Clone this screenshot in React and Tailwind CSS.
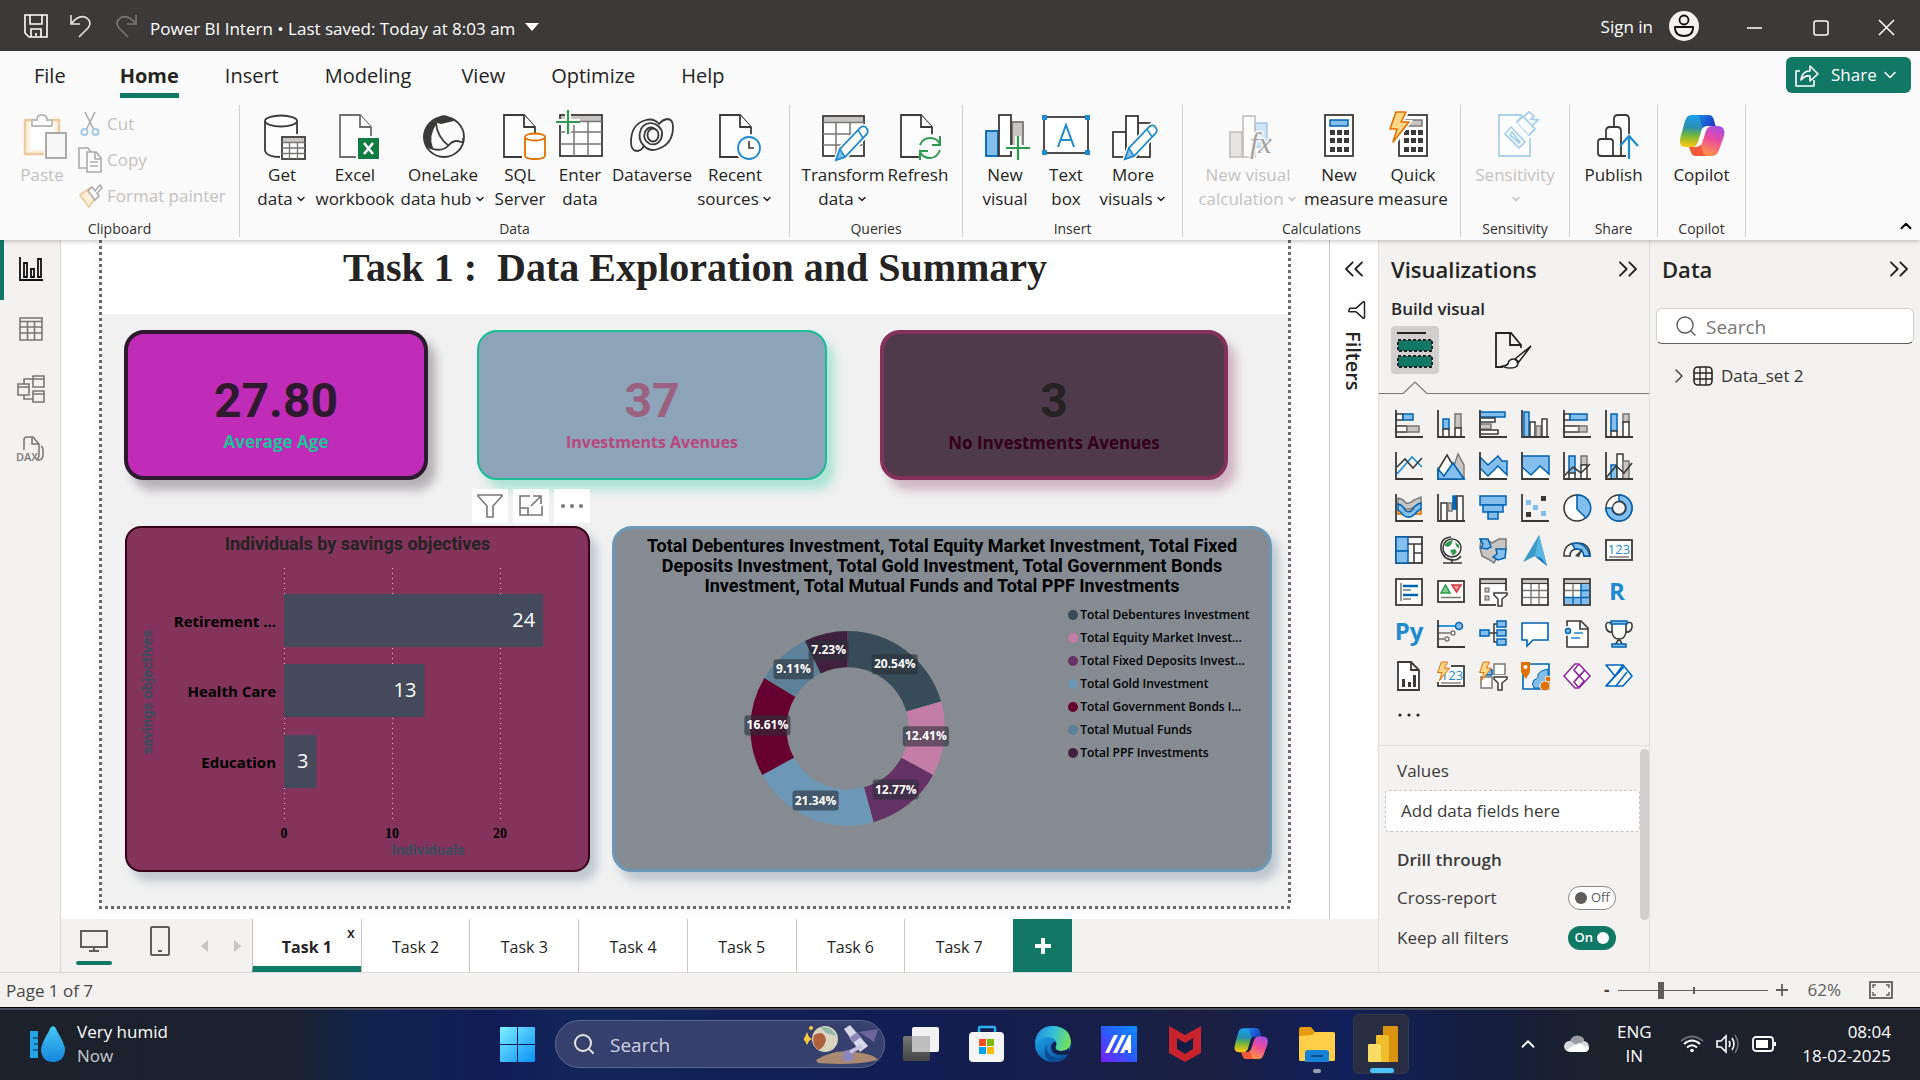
import React from "react";
import { ChevronDown, ChevronUp, ChevronRight, ChevronsLeft, ChevronsRight, Search, Filter } from "lucide-react";

const DK = "#3b3a39";
const BL = "#83beec";
const BS = "#0063b1";
const GR = "#c8c6c4";
const GS = "#797775";
const WH = "#ffffff";

/* ---------- shared drawing helpers ---------- */

function Svg({ s = 48, children, className = "" }) {
  return (
    <svg width={s} height={s} viewBox={`0 0 ${s} ${s}`} fill="none" className={`shrink-0 overflow-visible ${className}`} aria-hidden="true">
      {children}
    </svg>
  );
}

const Box = ({ x, y, w, h, f = WH, k = DK, sw = 1.5 }) => (
  <rect x={x} y={y} width={w} height={h} fill={f} stroke={k} strokeWidth={sw} />
);

const Axis = () => <path d="M1 0V27H28" stroke={DK} strokeWidth="1.8" />;

const Doc = ({ x = 8, c = DK, h = 42 }) => (
  <g stroke={c} strokeWidth="1.8" fill="#fdfdfd">
    <path d={`M${x} 3H${x + 20}L${x + 31} 15V${h + 3}H${x}Z`} />
    <path d={`M${x + 20} 3V15H${x + 31}`} />
  </g>
);

const Pencil = ({ x = 0, y = 0 }) => (
  <g transform={`translate(${x} ${y})`}>
    <path d="M16 47L20 36L41 14Q45 12 47 16Q49 19 46 22L25 44Z" fill="#fff" stroke="#fafafa" strokeWidth="5" />
    <path d="M16 47L20 36L41 14Q45 12 47 16Q49 19 46 22L25 44Z" fill="#fff" stroke="#1e8bcd" strokeWidth="1.8" />
    <path d="M16 47L20 36L25 44Z" fill="#83beec" stroke="#1e8bcd" strokeWidth="1.5" />
    <path d="M38 17L43 25" stroke="#1e8bcd" strokeWidth="1.5" />
  </g>
);

const Plus = ({ x, y }) => (
  <g>
    <path d={`M${x - 12} ${y}H${x + 12}M${x} ${y - 12}V${y + 12}`} stroke="#fafafa" strokeWidth="6" />
    <path d={`M${x - 12} ${y}H${x + 12}M${x} ${y - 12}V${y + 12}`} stroke="#2f9950" strokeWidth="2.2" />
  </g>
);

const Bolt = ({ s = 1 }) => (
  <path transform={`scale(${s})`} d="M7 0H17L12 10H20L4 30L8 17H1Z" fill="#ffd68a" stroke="#e07000" strokeWidth="1.6" strokeLinejoin="round" />
);

const Calc = ({ x, screen = BL, line = BS }) => (
  <g>
    <Box x={x} y={3} w={28} h={41} sw={1.8} />
    <Box x={x + 5} y={8} w={18} h={6} f={screen} k={line} />
    {[18, 26, 35].map((y) => [5, 12, 19].map((d) => <rect key={`${y}-${d}`} x={x + d} y={y} width="5" height="5" fill={DK} />))}
  </g>
);

function CopilotMark({ s = 48, id }) {
  return (
    <svg width={s} height={s} viewBox="0 0 48 48" fill="none" aria-hidden="true" className="shrink-0">
      <defs>
        <linearGradient id={`${id}a`} x1="14" y1="3" x2="12" y2="34" gradientUnits="userSpaceOnUse">
          <stop stopColor="#1aa0ec" />
          <stop offset="0.4" stopColor="#2a8fb0" />
          <stop offset="0.65" stopColor="#6fb53c" />
          <stop offset="1" stopColor="#f7c80c" />
        </linearGradient>
        <linearGradient id={`${id}b`} x1="40" y1="14" x2="28" y2="44" gradientUnits="userSpaceOnUse">
          <stop stopColor="#a44fe6" />
          <stop offset="0.45" stopColor="#ee4b9b" />
          <stop offset="1" stopColor="#ff9a3e" />
        </linearGradient>
        <linearGradient id={`${id}c`} x1="20" y1="3" x2="36" y2="14" gradientUnits="userSpaceOnUse">
          <stop stopColor="#1a8be8" />
          <stop offset="1" stopColor="#2036c4" />
        </linearGradient>
      </defs>
      <path d="M13 3H31Q34 3 35.500 7L37.500 14H29Q25 14 23.500 18L20 30Q18 35 14 35H8Q0 35 2.500 25L7 9Q9 3 13 3Z" fill={`url(#${id}a)`} />
      <path d="M20 3H31Q34 3 35.500 7L37.500 14H29Q26 14 24.500 16L22 8Q21 3 17 3Z" fill={`url(#${id}c)`} />
      <path d="M35 14H40Q48 14 46 24L41 38Q39 44 34 44H18Q14 44 13 40L11 35H18Q22.500 35 24 31L28 19Q29.500 14 35 14Z" fill={`url(#${id}b)`} />
      <path d="M11 35H18Q21 35 22.500 33L25 40Q26.500 44 30 44H18Q14 44 13 40Z" fill="#f5573b" />
    </svg>
  );
}

/* ---------- ribbon icons ---------- */

const ICONS = {
  getData: (
    <Svg>
      <path d="M7 9V39Q10 45 22 45V24H39V9Z" fill="#fdfdfd" />
      <path d="M7 9V39Q9 45 22 45M39 9V22" stroke={DK} strokeWidth="1.8" />
      <ellipse cx="23" cy="9" rx="16" ry="5.500" fill="#fff" stroke={DK} strokeWidth="1.8" />
      <Box x={24} y={25} w={23} h={22} sw={1.8} />
      <rect x="25" y="26" width="21" height="4" fill={GR} />
      <path d="M24 30.500H47M24 36H47M24 41.500H47M31.500 30V47M39.500 30V47" stroke={GS} strokeWidth="1.4" />
    </Svg>
  ),
  excel: (
    <Svg>
      <Doc x={9} c="#6e6d6b" />
      <rect x="25" y="24" width="24" height="25" fill="#fafafa" />
      <rect x="27" y="26" width="21" height="21" fill="#107c41" />
      <path d="M33 31L42 42M42 31L33 42" stroke="#fff" strokeWidth="2.600" />
    </Svg>
  ),
  oneLake: (
    <Svg>
      <path d="M14 10Q24 -3 35 9L22 12Z" fill={DK} />
      <circle cx="25" cy="25" r="20" stroke={DK} strokeWidth="1.8" />
      <path d="M14 9Q2 18 5 30Q7 37 14 36Q9 24 18 11Z" fill={DK} />
      <path d="M17 11Q18 25 30 34M7 34Q22 42 30 33Q35 27 42 30Q45 31 44 26" stroke={DK} strokeWidth="1.8" />
    </Svg>
  ),
  sql: (
    <Svg>
      <Doc x={8} />
      <rect x="26" y="21" width="25" height="28" fill="#fafafa" />
      <path d="M29 26V44Q30 47 39 47T49 44V26" fill="#fff" stroke="#e07000" strokeWidth="1.8" />
      <ellipse cx="39" cy="25" rx="10" ry="3.500" fill="#fff" stroke="#e07000" strokeWidth="1.8" />
    </Svg>
  ),
  enter: (
    <Svg>
      <Box x={4} y={3} w={42} h={41} sw={1.8} />
      <rect x="5" y="4" width="40" height="5" fill={GR} />
      <path d="M4 9.500H46M4 20H46M4 32H46M18 10V44M32 10V44" stroke={GS} strokeWidth="1.5" />
      <Plus x={12} y={10} />
    </Svg>
  ),
  dataverse: (
    <Svg>
      <g stroke={DK} strokeWidth="1.8">
        <path d="M31 12Q26 6 18 8Q3 12 3 30Q3 39 9 39Q13 39 16 34Q22 40 30 37Q45 32 45 15Q45 7 39 7Q34 8 31 12Z" />
        <path d="M16 34Q9 27 13 17Q18 9 27 12Q37 17 33 27Q29 34 22 32Q14 28 17 20Q20 14 26 16" />
        <ellipse cx="25" cy="23" rx="5.500" ry="6.500" />
      </g>
    </Svg>
  ),
  recent: (
    <Svg>
      <Doc x={9} />
      <circle cx="38" cy="36" r="14" fill="#fafafa" />
      <circle cx="38" cy="36" r="11" fill="#fff" stroke="#1e8bcd" strokeWidth="1.8" />
      <path d="M38 29V36H43" stroke={DK} strokeWidth="1.600" />
    </Svg>
  ),
  transform: (
    <Svg>
      <Box x={4} y={4} w={41} h={40} sw={1.8} />
      <rect x="5" y="5" width="39" height="5" fill={GR} />
      <path d="M4 10.500H45M4 22H45M4 33H45M17 11V44M31 11V44" stroke={GS} strokeWidth="1.5" />
      <Pencil x={1} y={1} />
    </Svg>
  ),
  refresh: (
    <Svg>
      <Doc x={7} />
      <circle cx="36" cy="36" r="14" fill="#fafafa" />
      <path d="M26 33Q29 26 36 26Q43 26 46 32M46 24V33H38M46 38Q43 46 36 46Q29 46 26 40M26 48V39H34" stroke="#2f9950" strokeWidth="2" />
    </Svg>
  ),
  newVisual: (
    <Svg>
      <Box x={5} y={19} w={12} h={25} f={BL} k={BS} sw={1.8} />
      <Box x={31} y={10} w={11} h={24} f={GR} k={GS} sw={1.8} />
      <Box x={18} y={3} w={12} h={41} sw={1.8} />
      <Plus x={37} y={36} />
    </Svg>
  ),
  textBox: (
    <Svg>
      <Box x={2} y={5} w={44} h={36} sw={1.8} />
      <path d="M16 35L24 13L32 35M18.500 28H29.500" stroke="#1e8bcd" strokeWidth="2" />
      {[[0, 3], [43, 3], [0, 38], [43, 38]].map(([x, y]) => <rect key={`${x}-${y}`} x={x} y={y} width="5" height="5" fill="#1e8bcd" />)}
    </Svg>
  ),
  moreVisuals: (
    <Svg>
      <Box x={4} y={20} w={13} h={25} sw={1.8} />
      <Box x={29} y={11} w={12} h={34} sw={1.8} />
      <Box x={17} y={4} w={12} h={41} sw={1.8} />
      <Pencil />
    </Svg>
  ),
  newCalc: (
    <Svg>
      <Box x={6} y={20} w={12} h={25} f="#e6e5e4" k="#bdbbb9" />
      <Box x={31} y={11} w={12} h={24} f="#cde4f7" k="#a5c8e4" />
      <Box x={19} y={4} w={12} h={41} f="#fff" k="#bdbbb9" />
      <text x="26" y="41" fontFamily="Liberation Serif, serif" fontStyle="italic" fontSize="30" fill="#a3a19f" stroke="#fafafa" strokeWidth="3" paintOrder="stroke">fx</text>
    </Svg>
  ),
  newMeasure: <Svg><Calc x={10} /></Svg>,
  quick: (
    <Svg>
      <Calc x={10} screen={GR} line={GS} />
      <path d="M4 -3H22L16 8H24L6 34L-1 20Z" fill="#fafafa" />
      <Bolt />
    </Svg>
  ),
  sensitivity: (
    <Svg>
      <g stroke="#a9d2ea" strokeWidth="1.8" fill="#fdfdfd">
        <path d="M31 3H8V44H39V26" />
        <path d="M14 22L20 15L34 30L28 36Z" />
        <path d="M19 23L21 20L29 30L28 31Z" />
        <path d="M26 10L30 5L43 18L38 23Z" fill="#a9d2ea" />
        <path d="M26 10L32 4L44 17L38 23M31 6L38 0L43 4L40 7L47 8L40 15" />
      </g>
    </Svg>
  ),
  publish: (
    <Svg>
      <g stroke={DK} strokeWidth="1.8" fill="#fdfdfd">
        <path d="M24 44V7Q24 3 28 3H35Q39 3 39 7V44Z" />
        <path d="M16 44V19Q16 15 20 15H27Q31 15 31 19V44Z" />
        <path d="M8 41V30Q8 27 11 27H20Q23 27 23 30V44H11Q8 44 8 41Z" />
      </g>
      <path d="M39 22V47" stroke="#fafafa" strokeWidth="6" />
      <path d="M39 47V24M30 34L39 24L48 34" stroke="#1e8bcd" strokeWidth="2.200" />
    </Svg>
  ),
  copilot: <CopilotMark id="rc" />,
};

function RibbonButton({ icon, l1, l2, caret, w, off }) {
  return (
    <button disabled={off} className={`flex ${w} shrink-0 flex-col items-center text-[17px] leading-6 whitespace-nowrap ${off ? "text-[#c4c2c0]" : "text-[#252423]"}`}>
      {ICONS[icon]}
      <span className="mt-[3px]">{l1}</span>
      <span className="flex h-6 items-center">
        {l2}
        {caret && <ChevronDown size={12} strokeWidth={3} className="ml-0.5" />}
      </span>
    </button>
  );
}

function Group({ name, w, children, pl = "" }) {
  return (
    <section aria-label={name} className={`flex ${w} h-[132px] shrink-0 flex-col border-r border-[#d2d0ce]`}>
      <div className={`flex flex-1 pt-[7px] ${pl}`}>{children}</div>
      <div className="text-center text-[14px] leading-4 text-[#323130]">{name}</div>
    </section>
  );
}

const TABS = [
  ["File", "mr-2"],
  ["Home", "border-b-[5px] border-[#117865] font-bold"],
  ["Insert", ""],
  ["Modeling", "mr-1"],
  ["View", ""],
  ["Optimize", ""],
  ["Help", ""],
];

function TitleBar() {
  return (
    <header className="flex h-[51px] items-center bg-[#3b3a39] text-white">
      <button aria-label="Save" className="ml-6">
        <Svg s={24}>
          <path d="M1 1H23V23H5L1 19ZM6 1V10H18V1M7 23V15H17V23M12 19V22" stroke="#fff" strokeWidth="1.600" />
        </Svg>
      </button>
      <button aria-label="Undo" className="ml-[22px]">
        <Svg s={24}><path d="M1 1V10H10M1 10Q8 1 15 3Q23 7 18 14L9 23" stroke="#e6e5e4" strokeWidth="1.600" /></Svg>
      </button>
      <button aria-label="Redo" className="ml-5">
        <Svg s={24}><path d="M22 1V10H13M22 10Q15 1 8 3Q0 7 5 14L14 23" stroke="#797775" strokeWidth="1.600" /></Svg>
      </button>
      <button className="ml-3 flex items-center pt-1.5 text-[17px] leading-6">
        Power BI Intern • Last saved: Today at 8:03 am
        <svg width="14" height="8" className="mb-1 ml-2.5" aria-hidden="true"><path d="M0 0H14L7 8Z" fill="#fff" /></svg>
      </button>
      <button className="ml-auto flex items-center gap-4 text-[17px]">
        <span className="pt-0.5">Sign in</span>
        <svg width="30" height="30" viewBox="0 0 30 30" aria-hidden="true">
          <circle cx="15" cy="15" r="15" fill="#f3f2f1" />
          <g fill="none" stroke="#111" strokeWidth="1.800"><circle cx="15" cy="9" r="4.500" /><path d="M6 16H24V18Q23 25 15 25T6 18Z" /></g>
        </svg>
      </button>
      <button aria-label="Minimize" className="ml-12 mt-1"><Svg s={16}><path d="M0 8H15" stroke="#fff" strokeWidth="1.500" /></Svg></button>
      <button aria-label="Maximize" className="mt-1 ml-[50px]"><Svg s={16}><rect x="1" y="1" width="14" height="14" rx="2" stroke="#fff" strokeWidth="1.500" /></Svg></button>
      <button aria-label="Close" className="mt-1 mr-[25px] ml-[50px]"><Svg s={16}><path d="M0 0L15 15M15 0L0 15" stroke="#fff" strokeWidth="1.500" /></Svg></button>
    </header>
  );
}

function Ribbon() {
  return (
    <div className="relative z-10 bg-[#fafafa] shadow-[0_1px_5px_rgba(0,0,0,0.25)]">
      <nav className="flex h-[54px] items-start pl-[11px] text-[20px] text-[#252423]">
        {TABS.map(([t, c]) => (
          <a key={t} href="#" className="px-[23px]">
            <span className={`block h-[47px] pt-[11px] leading-7 ${c}`}>{t}</span>
          </a>
        ))}
        <button className="mt-[6px] mr-[9px] ml-auto flex h-9 w-[125px] items-center rounded-md bg-[#117865] pl-[9px] text-[17px] text-white">
          <Svg s={24}><path d="M5 8H1V23H19V17M6 17Q7 8 15 8V3L23 11L15 18V13Q10 12 6 17Z" stroke="#fff" strokeWidth="1.600" strokeLinejoin="round" /></Svg>
          <span className="ml-3">Share</span>
          <ChevronDown size={20} strokeWidth={1.8} className="ml-[3px]" />
        </button>
      </nav>
      <div className="flex h-[135px]">
        <Group name="Clipboard" w="w-[240px]">
          <button disabled className="ml-[12px] flex w-[60px] flex-col items-center text-[17px] leading-6 text-[#c4c2c0]">
            <Svg className="ml-2">
              <path d="M3 8V42H22V22H37V8Z" fill="#fdf3e0" />
              <rect x="8" y="12" width="25" height="26" fill="#fff" />
              <path d="M22 42H3V8H12M37 20V8H28" stroke="#f0c9a0" strokeWidth="2.400" />
              <path d="M10 14V8H15Q15 3 20 3T25 8H30V14Z" fill="#fff" stroke="#bdbbb9" strokeWidth="1.800" />
              <Box x={24} y={21} w={20} h={25} f="#f7f7f7" k="#adabaa" sw={2} />
            </Svg>
            <span className="mt-[3px]">Paste</span>
          </button>
          <div className="flex flex-col items-start text-[17px] text-[#c4c2c0]">
            <button disabled className="ml-1.5 flex h-6 items-center gap-[5px]">
              <Svg s={24}><path d="M7 0L16 18M17 0L8 18" stroke="#adabaa" strokeWidth="1.600" /><circle cx="6.500" cy="20" r="3" stroke="#a5cbe4" strokeWidth="2" /><circle cx="17.500" cy="20" r="3" stroke="#a5cbe4" strokeWidth="2" /></Svg>
              Cut
            </button>
            <button disabled className="mt-3 ml-1.5 flex h-6 items-center gap-[5px]">
              <Svg s={24}><g stroke="#adabaa" strokeWidth="1.600"><path d="M9 20H1V0H10L13 4" /><path d="M9 4H18L23 10V24H9ZM17 4V11H23M12 14H20M12 18H20" fill="#fafafa" /></g></Svg>
              Copy
            </button>
            <button disabled className="mt-3 ml-1.5 flex h-6 items-center gap-[5px]">
              <Svg s={24}><path d="M2 11L12 4L19 12L11 23Z" fill="#fdf0d8" stroke="#f0c9a0" strokeWidth="1.800" /><path d="M10 7L14 3L17 7L22 1L24 4L19 9L21 12L17 16Z" fill="#fff" stroke="#adabaa" strokeWidth="1.600" /></Svg>
              Format painter
            </button>
          </div>
        </Group>
        <Group name="Data" w="w-[550px]" pl="pl-[10px]">
          <RibbonButton icon="getData" l1="Get" l2="data" caret w="w-[64px]" />
          <RibbonButton icon="excel" l1="Excel" l2="workbook" w="w-[82px]" />
          <RibbonButton icon="oneLake" l1="OneLake" l2="data hub" caret w="w-[94px]" />
          <RibbonButton icon="sql" l1="SQL" l2="Server" w="w-[60px]" />
          <RibbonButton icon="enter" l1="Enter" l2="data" w="w-[60px]" />
          <RibbonButton icon="dataverse" l1="Dataverse" w="w-[84px]" />
          <RibbonButton icon="recent" l1="Recent" l2="sources" caret w="w-[82px]" />
        </Group>
        <Group name="Queries" w="w-[173px]" pl="pl-[8px]">
          <RibbonButton icon="transform" l1="Transform" l2="data" caret w="w-[90px]" />
          <RibbonButton icon="refresh" l1="Refresh" w="w-[60px]" />
        </Group>
        <Group name="Insert" w="w-[220px]" pl="pl-[9px]">
          <RibbonButton icon="newVisual" l1="New" l2="visual" w="w-[66px]" />
          <RibbonButton icon="textBox" l1="Text" l2="box" w="w-[56px]" />
          <RibbonButton icon="moreVisuals" l1="More" l2="visuals" caret w="w-[78px]" />
        </Group>
        <Group name="Calculations" w="w-[278px]" pl="pl-[10px]">
          <RibbonButton icon="newCalc" l1="New visual" l2="calculation" caret off w="w-[110px]" />
          <RibbonButton icon="newMeasure" l1="New" l2="measure" w="w-[72px]" />
          <RibbonButton icon="quick" l1="Quick" l2="measure" w="w-[76px]" />
        </Group>
        <Group name="Sensitivity" w="w-[109px]" pl="justify-center">
          <RibbonButton icon="sensitivity" l1="Sensitivity" caret off w="w-[90px]" />
        </Group>
        <Group name="Share" w="w-[88px]" pl="justify-center">
          <RibbonButton icon="publish" l1="Publish" w="w-[70px]" />
        </Group>
        <Group name="Copilot" w="w-[88px]" pl="justify-center">
          <RibbonButton icon="copilot" l1="Copilot" w="w-[70px]" />
        </Group>
        <button aria-label="Collapse ribbon" className="mr-[5px] mb-[5px] ml-auto self-end"><ChevronUp size={18} strokeWidth={2.5} /></button>
      </div>
    </div>
  );
}

function LeftRail() {
  const items = [
    ["Report view", <Svg s={24} key="r"><path d="M1 0V23H24M5 6H8V20H5ZM12 12H15V20H12ZM19 2H22V20H19Z" stroke="#111" strokeWidth="1.800" /></Svg>],
    ["Table view", <Svg s={24} key="t"><path d="M1 1H23V23H1ZM1 4.500H23M1 10H23M1 16H23M8.500 5V23M15.500 5V23" stroke={GS} strokeWidth="1.600" /></Svg>],
    ["Model view", <Svg s={28} key="m"><path d="M16 1H27V12H16ZM16 4H27M16 16H27V27H16ZM16 19H27M1 9H12V20H1ZM1 12H12M7 9V4H16M7 20V24H16" stroke={GS} strokeWidth="1.600" /></Svg>],
    ["DAX query view", (
      <Svg s={28} key="d">
        <path d="M7 15V5Q7 2 10 2H16L22 9V20Q22 24 19 24M15 2V9H22M24 11Q26 12 26 15V20Q26 25 21 25" stroke={GS} strokeWidth="1.500" />
        <text x="-1" y="26" fontSize="11" fontWeight="600" fill={GS} fontFamily="Open Sans, sans-serif">DAX</text>
      </Svg>
    )],
  ];
  return (
    <nav className="flex w-[61px] shrink-0 flex-col border-r border-[#d8d6d4] bg-[#f3f2f1]">
      {items.map(([n, ic], i) => (
        <a key={n} href="#" aria-label={n} className={`flex h-[60px] items-center justify-center border-l-4 pr-[3px] pb-0.5 ${i === 0 ? "border-[#117865]" : "border-transparent"}`}>{ic}</a>
      ))}
    </nav>
  );
}

/* ---------- report ---------- */

const CARD = "flex h-[150px] flex-col items-center rounded-[20px] pt-[37px]";
const NUM = "font-[Roboto,sans-serif] text-[48px] leading-[59px] font-bold";

const BARS = [
  { name: "Retirement ...", value: 24, y: 32 },
  { name: "Health Care", value: 13, y: 102 },
  { name: "Education", value: 3, y: 173 },
];

function BarChart() {
  const x0 = 157;
  const unit = 10.8;
  return (
    <svg viewBox="0 0 461 307" className="w-full" role="img" aria-label="Individuals by savings objectives">
      {[0, 10, 20].map((t) => (
        <g key={t}>
          <line x1={x0 + t * unit + 0.5} x2={x0 + t * unit + 0.5} y1="6" y2="259" stroke="#d9c3cd" strokeDasharray="1 4" />
          <text x={x0 + t * unit} y="276" textAnchor="middle" fontSize="14" fontWeight="700" fontFamily="Liberation Serif, serif">{t}</text>
        </g>
      ))}
      {BARS.map((b) => (
        <g key={b.name}>
          <rect x={x0} y={b.y} width={b.value * unit} height="53" fill="#45495c" />
          <text x={x0 + b.value * unit - 8} y={b.y + 33} textAnchor="end" fontSize="20" fill="#fff">{b.value}</text>
          <text x="149" y={b.y + 33} textAnchor="end" fontSize="15" fontWeight="700">{b.name}</text>
        </g>
      ))}
      <g fontFamily="Roboto, sans-serif" fontWeight="700" fontSize="15" fill="#3a4d5c">
        <text x="301" y="293" textAnchor="middle">Individuals</text>
        <text transform="translate(25 130) rotate(-90)" textAnchor="middle">savings objectives</text>
      </g>
    </svg>
  );
}

const SLICES = [
  { name: "Total Debentures Investment", pct: 20.54, color: "#374b59", lx: 279, ly: 68 },
  { name: "Total Equity Market Invest...", pct: 12.41, color: "#c47da7", lx: 310, ly: 140 },
  { name: "Total Fixed Deposits Invest...", pct: 12.77, color: "#643264", lx: 280, ly: 193 },
  { name: "Total Gold Investment", pct: 21.34, color: "#6c97b6", lx: 200, ly: 204 },
  { name: "Total Government Bonds I...", pct: 16.61, color: "#66002e", lx: 152, ly: 129 },
  { name: "Total Mutual Funds", pct: 9.11, color: "#5d8199", lx: 178, ly: 73 },
  { name: "Total PPF Investments", pct: 7.23, color: "#40203f", lx: 213, ly: 54 },
];

function Donut() {
  const cx = 232;
  const cy = 132;
  const pt = (r, f) => `${cx + r * Math.sin(f * 2 * Math.PI)} ${cy - r * Math.cos(f * 2 * Math.PI)}`;
  let acc = 0;
  const arcs = SLICES.map((s) => {
    const a = acc / 100.01;
    acc += s.pct;
    const b = acc / 100.01;
    return <path key={s.name} fill={s.color} d={`M${pt(97, a)}A97 97 0 0 1 ${pt(97, b)}L${pt(61, b)}A61 61 0 0 0 ${pt(61, a)}Z`} />;
  });
  return (
    <svg viewBox="0 0 450 272" className="w-[69%]" role="img" aria-label="Investment shares">
      {arcs}
      {SLICES.map((s) => {
        const w = s.pct > 10 ? 46 : 40;
        return (
          <g key={s.name}>
            <rect x={s.lx - w / 2} y={s.ly - 10} width={w} height="20" rx="3" fill="#2a2e38" fillOpacity="0.6" />
            <text x={s.lx} y={s.ly + 4} textAnchor="middle" fontSize="12" fontWeight="700" fill="#fff">{s.pct.toFixed(2)}%</text>
          </g>
        );
      })}
    </svg>
  );
}

function Report() {
  const vdots = "w-[3px] shrink-0 bg-[repeating-linear-gradient(to_bottom,#6b6a6f_0_3px,transparent_3px_6px)]";
  return (
    <main className="min-w-0 flex-1 bg-white px-[38px]">
      <div className="flex">
        <div className={vdots} />
        <div className="min-w-0 flex-1 shadow-[0_0_14px_rgba(0,0,0,0.08)]">
          <h1 className="h-[74px] bg-white pt-1 text-center font-['Liberation_Serif',serif] text-[40px] leading-[48px] font-bold whitespace-pre text-[#252423]">Task 1 :  Data Exploration and Summary</h1>
          <div className="h-[592px] bg-[#f1f1f1] pt-4 pr-4 pl-[22px]">
            <div className="grid grid-cols-[304fr_49fr_350fr_53fr_348fr] pr-11">
              <div className={`${CARD} border-4 border-[#2e1a2e] bg-[#c02cb7] shadow-[8px_10px_10px_rgba(46,26,46,0.3)]`}>
                <div className={`${NUM} text-[#2e1a2e]`}>27.80</div>
                <div className="text-[17px] leading-6 font-bold text-[#1bc39a]">Average Age</div>
              </div>
              <div className={`${CARD} col-start-3 border-2 border-[#1bbd97] bg-[#8da3b7] shadow-[8px_10px_10px_rgba(27,200,150,0.3)]`}>
                <div className={`${NUM} pt-0.5 text-[#9a6180]`}>37</div>
                <div className="text-[16px] leading-6 font-bold text-[#b8487f]">Investments Avenues</div>
              </div>
              <div className={`${CARD} col-start-5 border-4 border-[#83315a] bg-[#4f3a4c] shadow-[8px_10px_10px_rgba(131,49,90,0.3)]`}>
                <div className={`${NUM} text-[#252423]`}>3</div>
                <div className="text-[17px] leading-[26px] font-bold text-[#350019]">No Investments Avenues</div>
              </div>
            </div>
            <div className="mt-[9px] ml-[348px] flex h-[34px] gap-[5px]">
              <button aria-label="Filter" className="flex w-9 items-center justify-center bg-white/90">
                <Svg s={26}><path d="M1 2H25V3L16 13V24H10V13L1 3Z" stroke={GS} strokeWidth="1.600" /></Svg>
              </button>
              <button aria-label="Focus mode" className="flex w-9 items-center justify-center bg-white/90">
                <Svg s={24}><path d="M11 2H1V21H23V12M1 14H9V21M14 2H22V10M22 2L12 12" stroke={GS} strokeWidth="1.600" /></Svg>
              </button>
              <button aria-label="More options" className="flex w-9 items-center justify-center bg-white/90">
                <Svg s={24}><g fill={GS}><circle cx="3" cy="12" r="2" /><circle cx="12" cy="12" r="2" /><circle cx="21" cy="12" r="2" /></g></Svg>
              </button>
            </div>
            <div className="mt-[3px] grid grid-cols-[465fr_660fr] gap-[22px] pl-px">
              <section className="h-[346px] rounded-[16px] border-2 border-[#350018] bg-[#84335a] shadow-[7px_9px_10px_rgba(55,90,120,0.28)]">
                <h2 className="h-[34px] text-center font-[Roboto,sans-serif] text-[18px] leading-8 font-bold text-[#252423]">Individuals by savings objectives</h2>
                <BarChart />
              </section>
              <section className="h-[346px] rounded-[20px] border-[3px] border-[#6c97b6] bg-[#858b90] pt-[7px] shadow-[7px_9px_10px_rgba(55,90,120,0.28)]">
                <h2 className="text-center font-[Roboto,sans-serif] text-[18px] leading-5 font-bold text-black">
                  Total Debentures Investment, Total Equity Market Investment, Total Fixed
                  <br />
                  Deposits Investment, Total Gold Investment, Total Government Bonds
                  <br />
                  Investment, Total Mutual Funds and Total PPF Investments
                </h2>
                <div className="flex items-start">
                  <Donut />
                  <ul className="mt-[7px] ml-0.5 text-[12px] leading-[23px] font-semibold text-black">
                    {SLICES.map((s) => (
                      <li key={s.name} className="flex items-center gap-[2px] whitespace-nowrap">
                        <span className="size-[10px] rounded-full" style={{ backgroundColor: s.color }} />
                        {s.name}
                      </li>
                    ))}
                  </ul>
                </div>
              </section>
            </div>
          </div>
        </div>
        <div className={vdots} />
      </div>
      <div className="h-[3px] bg-[repeating-linear-gradient(to_right,#6b6a6f_0_3px,transparent_3px_6px)]" />
      <div className="h-[10px]" />
    </main>
  );
}

function PageTabs() {
  return (
    <div className="flex h-[53px] bg-[#f3f2f1]">
      <button aria-label="Desktop layout" className="ml-[15px] flex w-9 flex-col items-center pt-[10px]">
        <Svg s={30}><path d="M2 2H28V18H2ZM15 18V22M10 22H20" stroke="#605e5c" strokeWidth="2" /></Svg>
        <span className="mt-0.5 h-1 w-9 rounded-full bg-[#117865]" />
      </button>
      <button aria-label="Mobile layout" className="ml-[38px] self-start pt-[7px]">
        <svg width="20" height="30" aria-hidden="true"><rect x="1" y="1" width="18" height="28" rx="1" fill="none" stroke="#605e5c" strokeWidth="2" /><path d="M8 25H12" stroke="#605e5c" strokeWidth="2" /></svg>
      </button>
      <button aria-label="Previous page" className="ml-[31px]"><svg width="7" height="12"><path d="M7 0V12L0 6Z" fill="#c8c6c4" /></svg></button>
      <button aria-label="Next page" className="mr-[11px] ml-[26px]"><svg width="7" height="12"><path d="M0 0V12L7 6Z" fill="#c8c6c4" /></svg></button>
      <div className="flex w-[761px]">
        {[1, 2, 3, 4, 5, 6, 7].map((n) => (
          <a key={n} href="#" className={`relative flex flex-1 items-center justify-center border-l border-[#c8c6c4] bg-white text-[16px] text-[#252423] ${n === 1 ? "border-b-[6px] border-b-[#117865] pt-2 font-bold" : "pt-0.5"}`}>
            Task {n}
            {n === 1 && <span className="absolute top-1 right-1.5 text-[14px] leading-5 font-semibold">x</span>}
          </a>
        ))}
      </div>
      <button aria-label="New page" className="flex w-[59px] items-center justify-center bg-[#117865]">
        <Svg s={18}><path d="M9 1V17M1 9H17" stroke="#fff" strokeWidth="4" /></Svg>
      </button>
    </div>
  );
}

/* ---------- visualization gallery ---------- */

const Win = ({ children }) => (
  <g>
    <Box x={1} y={1} w={26} h={26} sw={1.8} />
    <rect x="2" y="2" width="24" height="3" fill={GR} />
    <path d="M1 5.500H27" stroke={DK} strokeWidth="1.200" />
    {children}
  </g>
);

const GLYPH = "font-['Open_Sans',sans-serif]";

const VISUALS = [
  ["Stacked bar chart", <><Box x={1} y={4} w={7} h={6} /><Box x={8} y={4} w={10} h={6} f={BL} k={BS} /><Box x={1} y={16} w={11} h={6} /><Box x={12} y={16} w={12} h={6} f={GR} k={GS} /><Axis /></>],
  ["Stacked column chart", <><Box x={6} y={9} w={6} h={10} f={BL} k={BS} /><Box x={6} y={19} w={6} h={8} /><Box x={18} y={4} w={6} h={14} f={GR} k={GS} /><Box x={18} y={18} w={6} h={9} /><Axis /></>],
  ["Clustered bar chart", <><Box x={1} y={2} w={25} h={5} f={BL} k={BS} /><Box x={1} y={8} w={15} h={4} /><Box x={1} y={14} w={11} h={5} f={GR} k={GS} /><Box x={1} y={20} w={18} h={4} /><Axis /></>],
  ["Clustered column chart", <><Box x={3} y={2} w={5} h={25} f={BL} k={BS} /><Box x={9} y={12} w={5} h={15} /><Box x={15} y={16} w={5} h={11} f={GR} k={GS} /><Box x={21} y={9} w={5} h={18} /><Axis /></>],
  ["100% stacked bar chart", <><Box x={1} y={4} w={6} h={6} /><Box x={7} y={4} w={17} h={6} f={BL} k={BS} /><Box x={1} y={16} w={15} h={6} /><Box x={16} y={16} w={8} h={6} f={GR} k={GS} /><Axis /></>],
  ["100% stacked column chart", <><Box x={6} y={4} w={6} h={17} f={BL} k={BS} /><Box x={6} y={21} w={6} h={6} /><Box x={18} y={4} w={6} h={8} f={GR} k={GS} /><Box x={18} y={12} w={6} h={15} /><Axis /></>],

  ["Line chart", <><path d="M2 22L17 5L27 15" stroke="#1e8bcd" strokeWidth="1.600" /><path d="M2 15L10 7L18 16L27 6" stroke={DK} strokeWidth="1.600" /><Axis /></>],
  ["Area chart", <><path d="M14 22L21 2L27 13V27H14Z" fill={GR} stroke={GS} strokeWidth="1.400" /><path d="M1 18L10 3L20 20V27H1Z" fill="#fff" stroke={DK} strokeWidth="1.600" /><path d="M1 17L7 24L16 11L27 27H1Z" fill={BL} stroke={BS} strokeWidth="1.600" /></>],
  ["Stacked area chart", <><path d="M1 16L9 24L19 14L28 23V27H1Z" fill="#fff" /><path d="M1 5L9 13L19 4L23 9H28V23L19 14L9 24L1 16Z" fill={BL} stroke={BS} strokeWidth="1.500" /><Axis /></>],
  ["100% stacked area chart", <><path d="M1 14L10 23L19 14L28 22V27H1Z" fill="#fff" /><path d="M1 4H28V22L19 14L10 23L1 15Z" fill={BL} stroke={BS} strokeWidth="1.500" /><Axis /></>],
  ["Line and stacked column chart", <><Box x={6} y={4} w={6} h={18} f={BL} k={BS} /><Box x={6} y={21} w={6} h={6} /><Box x={18} y={4} w={6} h={9} f={GR} k={GS} /><Box x={18} y={13} w={6} h={14} /><path d="M1 24L10 15L18 21L27 12" stroke={DK} strokeWidth="1.600" /><Axis /></>],
  ["Line and clustered column chart", <><Box x={6} y={13} w={6} h={14} f={BL} k={BS} /><Box x={12} y={2} w={6} h={25} /><Box x={18} y={9} w={6} h={18} f={GR} k={GS} /><path d="M1 26L11 14L19 21L27 11" stroke={DK} strokeWidth="1.600" /><Axis /></>],

  ["Ribbon chart", <><path d="M3 15H9Q14 10 19 15H26V20H19Q14 26 9 20H3Z" fill="#ffc27a" stroke="#e07000" strokeWidth="1.500" /><path d="M3 4Q8 5 11 9Q15 10 19 6L26 3V9L19 13Q14 17 9 14L3 11Z" fill={GR} stroke={GS} strokeWidth="1.400" /><path d="M3 10Q8 11 10 16Q14 20 18 15Q21 10 26 9V15Q22 17 20 20Q14 26 8 21Q6 18 3 16Z" fill={BL} stroke={BS} strokeWidth="1.500" /><Axis /></>],
  ["Waterfall chart", <><Box x={4} y={9} w={6} h={18} /><Box x={11} y={9} w={4} h={8} f={GR} k={GS} /><Box x={16} y={2} w={3} h={13} f={BS} k={BS} /><Box x={20} y={2} w={6} h={25} /><Axis /></>],
  ["Funnel chart", <g><Box x={1} y={2} w={26} h={9} f={BL} k={BS} /><Box x={4} y={11} w={20} h={7} f={BL} k={BS} /><Box x={9} y={18} w={10} h={7} f={BL} k={BS} /></g>],
  ["Scatter chart", <><rect x="5" y="6" width="5" height="5" fill={BL} /><rect x="12" y="11" width="5" height="5" fill={BL} /><rect x="20" y="2" width="5" height="5" fill={DK} /><rect x="5" y="18" width="5" height="5" fill={DK} /><rect x="20" y="17" width="5" height="5" fill={BL} /><Axis /></>],
  ["Pie chart", <><circle cx="14" cy="14" r="13" fill="#fff" stroke={DK} strokeWidth="1.600" /><path d="M14 1A13 13 0 0 1 23 24L14 15Z" fill={BL} stroke={BS} strokeWidth="1.600" /></>],
  ["Donut chart", <><circle cx="14" cy="14" r="13" fill="#fff" stroke={DK} strokeWidth="1.400" /><path d="M14 1A13 13 0 1 1 1 14H7A7 7 0 1 0 14 7Z" fill={BL} stroke={BS} strokeWidth="1.600" /><circle cx="14" cy="14" r="6.500" fill="#f3f2f1" stroke={DK} strokeWidth="1.400" /></>],

  ["Treemap", <><Box x={1} y={1} w={26} h={26} sw={1.8} /><Box x={1} y={1} w={12} h={14} f={BL} k={BS} /><Box x={1} y={15} w={12} h={12} f={BL} k={BS} /><path d="M13 8H27M19 8V27M19 17H27" stroke={DK} strokeWidth="1.600" /></>],
  ["Map", <><circle cx="15" cy="12" r="9" fill="#fff" stroke={DK} strokeWidth="1.500" /><path d="M8 8L12 5L16 4L14 9L11 11L8 10ZM13 14L18 13L20 16L16 20ZM18 6L22 9L22 13L19 10Z" fill="#2f9950" /><path d="M14 1Q3 2 4 13Q6 24 17 24Q21 24 24 20M15 24V27M6 27H25" stroke={DK} strokeWidth="1.600" /></>],
  ["Filled map", <><path d="M2 3L10 5L13 7L20 3H27V13L23 22L17 23L15 27L9 23L3 20L1 12Z" fill={GR} stroke={GS} strokeWidth="1.500" /><path d="M1 3H9L12 11L8 13L2 12L4 8Z" fill={BL} stroke={BS} strokeWidth="1.500" /><path d="M17 13H27L26 22L19 24L14 21L18 18Z" fill={BL} stroke={BS} strokeWidth="1.500" /></>],
  ["Azure map", <><path d="M18 -1L26 30L14 20L2 26Z" fill="#3a9bcb" /><path d="M18 -1L26 30L14 20Z" fill="#58b4e0" /><path d="M14 20L26 30L20 22Z" fill="#0a66c2" /></>],
  ["Gauge", <><path d="M1 20Q1 7 14 7T27 20H21Q21 13 14 13T7 20Z" fill="#fff" stroke={DK} strokeWidth="1.600" /><path d="M9 8Q22 4 27 20H21Q20 12 12 13Z" fill={BL} stroke={BS} strokeWidth="1.600" /><path d="M12 20L20 12L16 21Z" fill={DK} /></>],
  ["Card", <><Box x={1} y={4} w={26} h={20} sw={1.8} /><text x="14" y="18" textAnchor="middle" fontSize="13" fill="#1e8bcd" className={GLYPH}>123</text><path d="M4 21H24" stroke={GS} strokeWidth="1.500" /></>],

  ["Multi-row card", <><Box x={1} y={1} w={26} h={26} sw={1.8} /><path d="M6 5V23M8 12H16M8 21H16" stroke={GS} strokeWidth="1.500" /><path d="M8 8H23M8 17H23" stroke={BS} strokeWidth="2.500" /></>],
  ["KPI", <><Box x={1} y={3} w={26} h={21} sw={1.8} /><path d="M4 15L8.500 7L13 15Z" fill="#7fcf92" stroke="#2f9950" strokeWidth="1.500" /><path d="M15 7H24L19.500 14Z" fill="#f79aa0" stroke="#d13438" strokeWidth="1.500" /><path d="M4 19.500H24" stroke={GS} strokeWidth="1.500" /></>],
  ["Slicer", <><Win><Box x={6} y={10} w={4} h={4} f={GR} k={GS} sw={1.2} /><Box x={6} y={18} w={4} h={4} f={GR} k={GS} sw={1.2} /></Win><path d="M13 13H30V30H17V22Z" fill="#f3f2f1" /><path d="M15 15H28V17L23 21V28H19V21L15 17Z" fill="#fff" stroke={DK} strokeWidth="1.500" /></>],
  ["Table", <Win><path d="M2 12.500H26M2 19.500H26M10 6V26M18 6V26" stroke={GS} strokeWidth="1.400" /></Win>],
  ["Matrix", <Win><path d="M18 6H26V26H2V20H18Z" fill={BL} /><path d="M2 12.500H18M10 6V19" stroke={GS} strokeWidth="1.400" /><path d="M1 19.500H26M18 6V27M10 20V27M18 12.500H26" stroke={BS} strokeWidth="1.400" /></Win>],
  ["R script visual", <text x="12" y="22" textAnchor="middle" fontSize="24" fontWeight="700" fill="#1e8bcd" className={GLYPH}>R</text>],

  ["Python visual", <text x="14" y="20" textAnchor="middle" fontSize="24" fontWeight="700" fill="#1e8bcd" className={GLYPH}>Py</text>],
  ["Key influencers", <><path d="M1 6H19" stroke="#1e8bcd" strokeWidth="1.800" /><circle cx="22" cy="6" r="3.500" fill={BL} stroke={BS} strokeWidth="1.500" /><path d="M1 13H14M1 19H8" stroke={GS} strokeWidth="1.500" /><circle cx="16" cy="13" r="2" fill="#fff" stroke={GS} strokeWidth="1.400" /><circle cx="10" cy="19" r="2" fill="#fff" stroke={GS} strokeWidth="1.400" /><Axis /></>],
  ["Decomposition tree", <><path d="M10 13H18M18 4H15V22H18" stroke={DK} strokeWidth="1.500" /><Box x={1} y={10} w={9} h={6} f={BL} k={BS} /><Box x={18} y={1} w={9} h={6} f={BL} k={BS} /><Box x={18} y={10} w={9} h={6} f={BL} k={BS} /><Box x={18} y={19} w={9} h={6} f={BL} k={BS} /></>],
  ["Q&A", <path d="M1 3H27V20H12L6 26V20H1Z" fill="#fff" stroke={BS} strokeWidth="1.600" />],
  ["Smart narrative", <><path d="M4 1H18L25 8V27H4ZM17 1V9H25" fill="#fff" stroke={DK} strokeWidth="1.600" /><circle cx="5" cy="11" r="5" fill="#f3f2f1" /><circle cx="5" cy="11" r="2.500" fill={BL} stroke={BS} strokeWidth="1.400" /><path d="M11 13H20M8 18H17" stroke="#1e8bcd" strokeWidth="1.500" /></>],
  ["Goals", <><path d="M6 3Q0 1 1 7Q2 13 8 12M22 3Q28 1 27 7Q26 13 20 12M7 4V12Q8 19 14 19T21 12V4M14 19L10 25H18Z" fill="#fff" stroke={DK} strokeWidth="1.600" /><Box x={6} y={1} w={16} h={3} f={BL} k={BS} /><Box x={7} y={24} w={14} h={3} f={BL} k={BS} /></>],

  ["Paginated report", <><path d="M3 0H16L24 8V28H3ZM16 0V8H24" fill="#fff" stroke={DK} strokeWidth="1.800" /><path d="M7 17H10V25H7ZM13 20H16V25H13ZM18 13H21V25H18Z" fill={DK} /></>],
  ["Card (new)", <><Box x={1} y={4} w={26} h={20} sw={1.8} /><path d="M-2 -2H14V8L3 20H-2Z" fill="#f3f2f1" /><text x="15" y="18" textAnchor="middle" fontSize="13" fill="#1e8bcd" className={GLYPH}>123</text><path d="M4 21H24" stroke={GS} strokeWidth="1.400" /><Bolt s={0.62} /></>],
  ["Slicer (new)", <><Box x={15} y={2} w={11} h={11} k={GS} /><Box x={2} y={15} w={11} h={11} k={GS} /><Box x={6} y={8} w={7} h={5} f={BL} k={BS} /><path d="M13 13H30V30H17V22Z" fill="#f3f2f1" /><path d="M15 15H28V17L23 21V28H19V21L15 17Z" fill="#fff" stroke={DK} strokeWidth="1.500" /><Bolt s={0.62} /></>],
  ["ArcGIS map", <><path d="M2 2H28V27H2Z" fill="#f0f4f8" stroke={BS} strokeWidth="1.600" /><path d="M13 26Q10 22 13 18Q18 17 17 12Q20 8 27 7V16Q22 17 23 21Q20 25 20 26Z" fill={BL} stroke={BS} /><path d="M0 0H9V10L5 17L0 10Z" fill="#e07000" /><circle cx="4.500" cy="5" r="2" fill="#fff" /><circle cx="27" cy="17" r="3" fill="#e07000" stroke="#f3f2f1" /><circle cx="24" cy="24" r="5" fill="#e07000" stroke="#f3f2f1" /></>],
  ["Power Apps", <g stroke="#8f2b9a" strokeWidth="1.600"><path d="M1 14L12 2H16L27 14L16 26H12Z" fill="#fff" /><path d="M16 2L11 8L21 19L16 25M11 8L16 14L11 20L16 26M22 8L12 19M16 14L21 9" /></g>],
  ["Power Automate", <g stroke="#0067c0" strokeWidth="1.600" strokeLinejoin="round"><path d="M1 3H18L27 14L18 24H1L10 14Z" fill="#fff" /><path d="M10 14L18 3M1 24L19 5M11 24L22 10" /></g>],
];

function Toggle({ label, on }) {
  return (
    <label className="relative flex h-10 items-center justify-between">
      {label}
      <input type="checkbox" role="switch" defaultChecked={on} className="sr-only" />
      {on ? (
        <span className="flex h-6 w-12 items-center justify-end gap-1 rounded-full bg-[#117865] pr-[7px] text-[13px] font-semibold text-white">On<span className="size-3 rounded-full bg-white" /></span>
      ) : (
        <span className="flex h-6 w-12 items-center gap-1 rounded-full border border-[#8a8886] bg-white pl-1.5 text-[13px] text-[#605e5c]"><span className="size-3 rounded-full bg-[#605e5c]" />Off</span>
      )}
    </label>
  );
}

function FiltersPane() {
  return (
    <aside className="flex w-[49px] shrink-0 flex-col items-center border-l border-[#c8c6c4] bg-white pt-[13px] text-[#252423]">
      <button aria-label="Expand filters"><ChevronsLeft size={32} strokeWidth={1.4} /></button>
      <Filter size={20} strokeWidth={1.8} className="mt-[15px] ml-1.5 rotate-90" />
      <h2 className="mt-[11px] pr-0.5 text-[20px] leading-6 font-semibold [writing-mode:vertical-rl]">Filters</h2>
    </aside>
  );
}

function VisualizationsPane() {
  return (
    <aside className="flex w-[271px] shrink-0 flex-col border-l border-[#e1dfdd] bg-[#f3f2f1] text-[#252423]">
      <div className="flex items-center justify-between pt-[13px] pr-[5px] pl-3">
        <h2 className="text-[22px] leading-8 font-semibold">Visualizations</h2>
        <button aria-label="Collapse visualizations"><ChevronsRight size={32} strokeWidth={1.4} /></button>
      </div>
      <h3 className="mt-3 pl-3 text-[17px] leading-6 font-semibold">Build visual</h3>
      <div className="mt-[5px] flex gap-[50px] pl-3">
        <button aria-label="Build visual" className="flex size-12 items-center justify-center rounded bg-[#d2d0ce]">
          <Svg s={36}>
            <path d="M0 1H29" stroke="#252423" strokeWidth="2" />
            <rect x="1" y="8" width="34" height="11" fill="#117865" stroke="#252423" strokeWidth="2" strokeDasharray="3 2" />
            <rect x="1" y="24" width="34" height="11" fill="#117865" stroke="#252423" strokeWidth="2" strokeDasharray="3 2" />
          </Svg>
        </button>
        <button aria-label="Format visual" className="flex size-12 items-center justify-center">
          <Svg s={36}>
            <path d="M8 35H1V1H16L26 13V16M15 1V13H26" stroke="#252423" strokeWidth="1.800" />
            <path d="M36 14L20 27Q24 29 23 31Z" fill="#fff" stroke="#252423" strokeWidth="1.600" />
            <path d="M8 34Q13 34 14 29Q18 25 22 29Q25 36 15 36Q10 36 8 34Z" fill="#fff" stroke="#252423" strokeWidth="1.600" />
          </Svg>
        </button>
      </div>
      <div className="mt-[7px] flex h-[13px] items-end">
        <span className="h-px w-6 bg-[#797775]" />
        <svg width="24" height="13" aria-hidden="true"><path d="M0 12.500L12 1L24 12.500" fill="none" stroke="#797775" strokeWidth="1.200" /></svg>
        <span className="h-px flex-1 bg-[#797775]" />
      </div>
      <div className="mt-[9px] grid grid-cols-[repeat(6,42px)] pl-[9px]">
        {VISUALS.map(([n, g]) => (
          <button key={n} aria-label={n} className="flex h-[42px] items-center justify-center"><Svg s={28}>{g}</Svg></button>
        ))}
      </div>
      <button aria-label="More visuals" className="mt-0.5 ml-[19px] flex h-8 w-6 items-center">
        <Svg s={24}><g fill="#252423"><circle cx="2" cy="12" r="1.600" /><circle cx="11" cy="12" r="1.600" /><circle cx="20" cy="12" r="1.600" /></g></Svg>
      </button>
      <div className="mt-[14px] flex flex-1 border-t border-[#e1dfdd]">
        <div className="flex-1 pt-[11px] pl-[6px] text-[17px] text-[#3b3a39]">
          <h4 className="pl-3 leading-7">Values</h4>
          <div className="mt-[5px] flex h-[42px] items-center rounded border border-dashed border-[#c8c6c4] bg-white pl-[15px]">Add data fields here</div>
          <h4 className="mt-4 pl-3 leading-6 font-semibold">Drill through</h4>
          <div className="mt-1.5 pr-6 pl-3">
            <Toggle label="Cross-report" />
            <Toggle label="Keep all filters" on />
          </div>
        </div>
        <div className="mt-[3px] h-[171px] w-[9px] rounded-full bg-[#d2d0ce]" />
      </div>
    </aside>
  );
}

function DataPane() {
  return (
    <aside className="w-[271px] shrink-0 border-l border-[#e1dfdd] bg-[#f3f2f1] text-[#252423]">
      <div className="flex items-center justify-between pt-[13px] pr-[5px] pl-3">
        <h2 className="text-[22px] leading-8 font-semibold">Data</h2>
        <button aria-label="Collapse data"><ChevronsRight size={32} strokeWidth={1.4} /></button>
      </div>
      <label className="mt-[23px] mr-1.5 ml-1.5 flex h-9 items-center rounded-md border border-[#d2d0ce] border-b-[#605e5c] bg-white pl-[17px]">
        <Search size={24} strokeWidth={1.4} className="shrink-0 text-[#605e5c]" />
        <input type="text" aria-label="Search data" placeholder="Search" className="ml-2 w-full min-w-0 bg-transparent pt-0.5 text-[19px] outline-none placeholder:text-[#797775]" />
      </label>
      <button className="mt-5 ml-[17px] flex h-6 items-center text-[17px] text-[#323130]">
        <ChevronRight size={24} strokeWidth={1.3} />
        <Svg s={20} className="ml-0.5"><rect x="1" y="1" width="18" height="18" rx="4" stroke="#252423" strokeWidth="1.600" /><path d="M1 7H19M1 13H19M7 1V19M13 1V19" stroke="#252423" strokeWidth="1.300" /></Svg>
        <span className="ml-2">Data_set 2</span>
      </button>
    </aside>
  );
}

function StatusBar() {
  return (
    <footer className="flex h-[35px] items-center border-t border-[#dddbd9] bg-[#f3f2f1] pr-[27px] pl-1.5 text-[17px] text-[#484644]">
      <span className="flex-1 pt-0.5">Page 1 of 7</span>
      <button aria-label="Zoom out" className="mr-2 font-bold">-</button>
      <div className="relative flex w-[150px] items-center">
        <span className="absolute left-[75px] h-[7px] w-0.5 bg-[#605e5c]" />
        <input type="range" aria-label="Zoom" min="0" max="100" defaultValue="28" className="h-px w-full appearance-none bg-[#605e5c] [&::-webkit-slider-thumb]:h-[17px] [&::-webkit-slider-thumb]:w-[6px] [&::-webkit-slider-thumb]:appearance-none [&::-webkit-slider-thumb]:bg-[#605e5c]" />
      </div>
      <button aria-label="Zoom in" className="ml-2"><Svg s={12}><path d="M6 0V12M0 6H12" stroke="#605e5c" strokeWidth="1.800" /></Svg></button>
      <span className="ml-5 text-[#605e5c]">62%</span>
      <button aria-label="Fit to page" className="ml-[28px]">
        <svg width="24" height="18" fill="none" stroke="#605e5c" aria-hidden="true"><rect x="1" y="1" width="22" height="16" strokeWidth="1.800" /><path d="M4 7V4H7M17 4H20V7M20 11V14H17M7 14H4V11" strokeWidth="1.400" /></svg>
      </button>
    </footer>
  );
}

/* ---------- taskbar ---------- */

const APPS = [
  ["Task view", <Svg s={36} key="a"><defs><linearGradient id="tv" x1="0" y1="0" x2="0" y2="1"><stop stopColor="#777" /><stop offset="1" stopColor="#444" /></linearGradient></defs><rect x="0" y="10" width="27" height="25" rx="2" fill="url(#tv)" /><rect x="9" y="1" width="27" height="25" rx="2" fill="#f2f2f2" /><rect x="9" y="10" width="18" height="16" fill="#bdbdbd" /></Svg>],
  ["Microsoft Store", <Svg s={36} key="b"><path d="M10 7V2Q10 1 11 1H25Q26 1 26 2V7" stroke="#29b0f0" strokeWidth="2.500" /><rect x="0" y="6" width="35" height="30" rx="4" fill="#f5f5f5" /><path d="M10 13H17V20H10Z" fill="#f25022" /><path d="M18 13H25V20H18Z" fill="#7fba00" /><path d="M10 21H17V28H10Z" fill="#00a4ef" /><path d="M18 21H25V28H18Z" fill="#ffb900" /></Svg>],
  ["Microsoft Edge", (
    <Svg s={36} key="c">
      <defs>
        <linearGradient id="e1" x1="2" y1="4" x2="34" y2="14" gradientUnits="userSpaceOnUse"><stop stopColor="#1f8fe0" /><stop offset="0.5" stopColor="#35c1d8" /><stop offset="1" stopColor="#6fe060" /></linearGradient>
        <linearGradient id="e2" x1="4" y1="10" x2="20" y2="36" gradientUnits="userSpaceOnUse"><stop stopColor="#1ba1e8" /><stop offset="1" stopColor="#0c59a4" /></linearGradient>
      </defs>
      <circle cx="18" cy="18" r="18" fill="url(#e2)" />
      <path d="M0 17Q2 0 18 0Q35 1 36 16Q35 26 25 25Q19 24 21 20Q23 12 14 11Q4 11 0 18Z" fill="url(#e1)" />
      <path d="M12 17Q10 30 22 32Q29 33 34 27Q28 39 15 35Q7 30 12 17Z" fill="#0b4a94" />
      <path d="M21 20Q19 24 25 25Q31 25 34 22V28L28 29Q15 29 16 20Q18 15 21 16Q22 18 21 20Z" fill="#10204f" />
    </Svg>
  )],
  ["MyASUS", <Svg s={36} key="d"><defs><linearGradient id="ma" x1="0" y1="36" x2="36" y2="0" gradientUnits="userSpaceOnUse"><stop stopColor="#7a1cf5" /><stop offset="0.5" stopColor="#2a5cff" /><stop offset="1" stopColor="#0a8fff" /></linearGradient></defs><rect width="36" height="36" fill="url(#ma)" /><path d="M4 27L13 9H17L8 27ZM12 27L21 9H25L16 27ZM19 27L28 9H30V27H27V24H24L23 27Z" fill="#fff" /></Svg>],
  ["McAfee", <Svg s={36} key="e"><path d="M2 0L18 9L34 0V27L18 36L2 27Z" fill="#c8232c" /><path d="M10 12L18 17L26 12V23L18 28L10 23Z" fill="#151c44" /></Svg>],
  ["Copilot", <CopilotMark key="f" s={36} id="tc" />],
  ["File Explorer", <Svg s={36} key="g"><path d="M0 3Q0 1 2 1H12L16 6H34Q36 6 36 8V34Q36 35 34 35H2Q0 35 0 34Z" fill="#e59b0e" /><path d="M0 10L13 9L16 6H34Q36 6 36 8V33Q36 35 34 35H2Q0 35 0 33Z" fill="#ffcf4a" /><path d="M6 36V27Q6 24 9 24H27Q30 24 30 27V36Z" fill="#1683d8" /><path d="M12 30H24" stroke="#0a4a8c" strokeWidth="2" /></Svg>],
];

function Taskbar() {
  return (
    <footer className="flex h-[73px] items-center border-t border-black bg-[linear-gradient(90deg,#1c212b_0%,#1b212e_15%,#10234c_19%,#101d57_26%,#12255a_30%,#101e55_45%,#1a1f42_63%,#11205a_70%,#151e3c_78%,#1c212c_83%,#1e2129_100%)] text-white shadow-[inset_0_2px_0_#4a4d5c]">
      <button className="ml-[29px] flex w-[471px] items-center gap-3 text-left">
        <Svg s={36}>
          <defs><linearGradient id="dr" x1="0" y1="0" x2="0" y2="1"><stop stopColor="#45c8f5" /><stop offset="1" stopColor="#1486dc" /></linearGradient></defs>
          <rect x="1" y="5" width="8" height="27" fill="#22a6e8" /><path d="M4 12H9M5 18H9M4 24H9" stroke="#0d4a80" strokeWidth="1.600" />
          <path d="M24 0Q27 1 28 5Q36 18 36 24Q35 36 24 36T12 24Q12 18 20 5Q21 1 24 0Z" fill="url(#dr)" />
        </Svg>
        <span className="text-[17px] leading-6"><span className="block">Very humid</span><span className="block text-[#c8cad0]">Now</span></span>
      </button>
      <button aria-label="Start">
        <Svg s={35}>
          <defs><linearGradient id="wn" x1="0" y1="0" x2="35" y2="35" gradientUnits="userSpaceOnUse"><stop stopColor="#7df0ff" /><stop offset="1" stopColor="#0a90f8" /></linearGradient></defs>
          <path d="M0 1Q0 0 1 0H17V17H0ZM18 0H34Q35 0 35 1V17H18ZM0 18H17V35H1Q0 35 0 34ZM18 18H35V34Q35 35 34 35H18Z" fill="url(#wn)" />
        </Svg>
      </button>
      <label className="ml-5 flex h-12 w-[330px] items-center rounded-full border border-[#5b6690] bg-[#35406c] pl-4">
        <Search size={24} strokeWidth={2} className="shrink-0 text-[#e6e5ea]" />
        <input type="text" aria-label="Search Windows" placeholder="Search" className="ml-[14px] w-full min-w-0 bg-transparent pt-0.5 text-[19px] outline-none placeholder:text-[#d0d3e2]" />
        <svg width="76" height="40" viewBox="0 0 76 40" className="mr-1 shrink-0" aria-hidden="true">
          <path d="M12 36Q30 25 50 28Q70 30 74 36Q50 42 14 39Z" fill="#a98a70" />
          <circle cx="21" cy="15" r="13" fill="#d8d4c0" /><path d="M10 11Q20 5 22 16Q20 24 14 26Q7 20 10 11Z" fill="#b0603c" /><path d="M16 3Q28 2 32 12L22 9Z" fill="#8fb8a8" />
          <path d="M40 5L46 1L64 22L56 28Z" fill="#d9d6ea" /><path d="M45 14L53 8L57 13L49 19Z" fill="#8d86b8" /><path d="M55 8L74 5L70 18Z" fill="#6d649c" /><circle cx="44" cy="32" r="6" fill="#8d86b8" /><path d="M46 28L58 22" stroke="#c6c1de" strokeWidth="4" />
          <path d="M3 8L5 13L8 15L5 17L3 21L1 17L-1 15L1 13Z" fill="#ffc83d" /><circle cx="7" cy="4" r="2" fill="#ffc83d" />
        </svg>
      </label>
      <div className="ml-[18px] flex h-full items-center gap-[30px]">
        {APPS.map(([n, ic]) => (
          <button key={n} aria-label={n} className="relative">
            {ic}
            {n === "File Explorer" && <span className="absolute -bottom-[11px] left-[14px] h-1 w-2 rounded-full bg-[#9a9cb0]" />}
          </button>
        ))}
        <button aria-label="Power BI Desktop" className="relative -ml-[12px] flex h-[60px] w-[56px] items-center justify-center rounded-md border border-[#35384c] bg-[#292d41]">
          <Svg s={36}>
            <path d="M20 0H34Q35 0 35 1V36H20Z" fill="#d9930f" />
            <path d="M13 10Q13 9 14 9H24Q26 9 26 11V36H13Z" fill="#f0bd2c" />
            <path d="M5 19Q5 18 6 18H16Q18 18 18 20V36H6Q5 36 5 35Z" fill="#f8dc62" />
          </Svg>
          <span className="absolute bottom-0 left-4 h-[5px] w-6 rounded-full bg-[#4cc2ff]" />
        </button>
      </div>
      <div className="mr-[29px] ml-auto flex items-center text-[17px] leading-6">
        <button aria-label="Show hidden icons"><ChevronUp size={22} strokeWidth={2} /></button>
        <svg width="26" height="18" className="ml-[25px]" aria-label="OneDrive" role="img"><path d="M6 17Q0 16 0 11Q1 6 6 6Q9 0 15 1Q20 2 20 6Q25 7 25 12T20 17Z" fill="#d8d8dc" /><path d="M6 6Q9 0 15 1Q20 2 20 6L13 10Z" fill="#9a9ca3" /><path d="M2 15L15 8L25 13Q24 17 20 17H6Z" fill="#fff" /></svg>
        <button className="ml-[26px] w-9 text-center">ENG<br />IN</button>
        <button aria-label="Network, volume and battery" className="ml-7 flex items-center gap-3">
          <svg width="24" height="18" fill="none" stroke="#fff" strokeWidth="1.800" aria-hidden="true"><path d="M1 6Q12 -3 23 6" stroke="#6a6d78" /><path d="M4 9Q12 2 20 9M7 12.500Q12 8 17 12.500" /><circle cx="12" cy="15.500" r="1.800" fill="#fff" stroke="none" /></svg>
          <svg width="24" height="20" fill="none" stroke="#fff" strokeWidth="1.600" aria-hidden="true"><path d="M1 7H5L10 2V18L5 13H1Z" /><path d="M13 7Q15 10 13 13M16 4Q20 10 16 16" /><path d="M19 1Q25 10 19 19" stroke="#6a6d78" /></svg>
          <svg width="24" height="16" fill="none" aria-hidden="true"><rect x="1" y="1" width="20" height="14" rx="3" stroke="#fff" strokeWidth="1.800" /><rect x="4" y="4" width="12" height="8" fill="#fff" /><path d="M23 6V10" stroke="#fff" strokeWidth="2" /></svg>
        </button>
        <button className="ml-[26px] text-right">08:04<br />18-02-2025</button>
      </div>
    </footer>
  );
}

export default function App() {
  return (
    <div className="flex min-h-screen flex-col bg-[#f3f2f1] font-['Open_Sans',sans-serif]">
      <TitleBar />
      <Ribbon />
      <div className="flex flex-1">
        <LeftRail />
        <div className="flex min-w-0 flex-1 flex-col">
          <div className="flex flex-1">
            <Report />
            <FiltersPane />
          </div>
          <PageTabs />
        </div>
        <VisualizationsPane />
        <DataPane />
      </div>
      <StatusBar />
      <Taskbar />
    </div>
  );
}
